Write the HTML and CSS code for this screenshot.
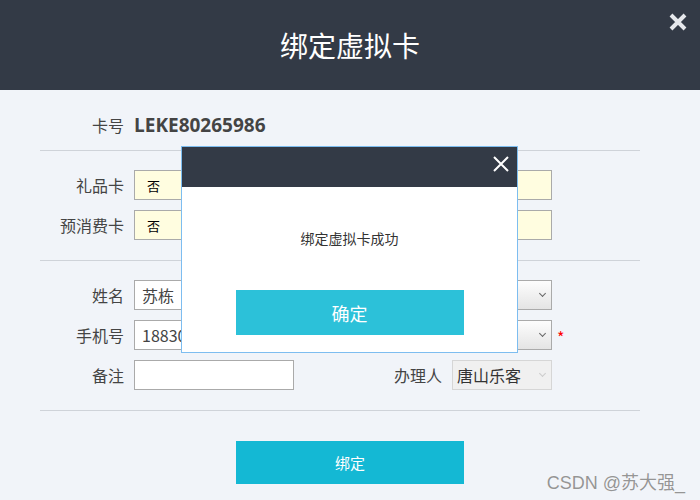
FILE: index.html
```html
<!DOCTYPE html>
<html lang="zh-CN">
<head>
    <meta charset="UTF-8">
    <title>绑定虚拟卡</title>
    <link rel="stylesheet" href="styles.css">
</head>
<body>
    <div class="page">
        <div class="page-head">
            <h1>绑定虚拟卡</h1>
            <span class="head-close">
                <svg width="18" height="18" viewBox="0 0 18 18"><path d="M2 2L16 16M16 2L2 16" stroke="#e6e8ec" stroke-width="4"/></svg>
            </span>
        </div>

        <div class="content">
            <div class="card-row">
                <span class="label">卡号</span>
                <span class="card-no">LEKE80265986</span>
            </div>

            <div class="section">
                <div class="form-row">
                    <span class="label">礼品卡</span>
                    <input class="field field-yellow" type="text" value="否" readonly>
                    <span class="label">余额</span>
                    <input class="field field-yellow" type="text" value="" readonly>
                </div>
                <div class="form-row">
                    <span class="label">预消费卡</span>
                    <input class="field field-yellow" type="text" value="否" readonly>
                    <span class="label">有效期</span>
                    <input class="field field-yellow" type="text" value="" readonly>
                </div>
            </div>

            <div class="section">
                <div class="form-row">
                    <span class="label">姓名</span>
                    <input class="field" type="text" value="苏栋">
                    <span class="label">性别</span>
                    <div class="select"><span></span><i class="chev"></i></div>
                </div>
                <div class="form-row">
                    <span class="label">手机号</span>
                    <input class="field" type="text" value="18830000000">
                    <span class="label">会员等级</span>
                    <div class="select"><span></span><i class="chev"></i></div>
                    <span class="req">*</span>
                </div>
                <div class="form-row">
                    <span class="label">备注</span>
                    <input class="field" type="text" value="">
                    <span class="label">办理人</span>
                    <div class="select select-off"><span>唐山乐客</span><i class="chev"></i></div>
                </div>
            </div>
        </div>

        <div class="bind-wrap">
            <button class="bind-btn">绑定</button>
        </div>

        <div class="watermark">CSDN @苏大强_</div>

        <div class="dialog">
            <div class="dialog-head">
                <span class="dialog-close">
                    <svg width="16" height="16" viewBox="0 0 16 16"><path d="M1 1L15 15M15 1L1 15" stroke="#fff" stroke-width="2"/></svg>
                </span>
            </div>
            <div class="dialog-body">
                <p class="dialog-msg">绑定虚拟卡成功</p>
                <button class="ok-btn">确定</button>
            </div>
        </div>
    </div>
</body>
</html>
```

FILE: styles.css
```css
body {
    margin: 0;
    font-family: "Noto Sans CJK SC", "Noto Sans", sans-serif;
    background: #f1f4f9;
}
.page {
    position: relative;
    width: 700px;
    height: 500px;
    overflow: hidden;
}
.page-head {
    position: relative;
    height: 90px;
    background: #333a46;
    display: flex;
    align-items: center;
    justify-content: center;
}
.page-head h1 {
    margin: 0;
    color: #fff;
    font-size: 28px;
    font-weight: normal;
    line-height: 1;
}
.head-close {
    position: absolute;
    top: 13px;
    right: 13px;
    width: 18px;
    height: 18px;
}
.head-close svg, .dialog-close svg {
    display: block;
}
.content {
    margin-left: 40px;
    width: 600px;
}
.card-row {
    height: 50px;
    padding-top: 10px;
    display: flex;
    align-items: center;
}
.label {
    font-size: 16px;
    color: #444;
    text-align: right;
    white-space: nowrap;
}
.card-row .label {
    width: 84px;
}
.card-no {
    margin-left: 10px;
    font-family: "Open Sans", "Noto Sans", sans-serif;
    font-size: 19px;
    font-weight: bold;
    color: #444;
}
.section {
    border-top: 1px solid #cfd3d9;
    padding: 19px 0 20px;
    display: flex;
    flex-direction: column;
    gap: 10px;
}
.section + .section {
    border-bottom: 1px solid #cfd3d9;
}
.form-row {
    display: grid;
    grid-template-columns: 84px 160px 138px 100px 20px;
    column-gap: 10px;
    align-items: center;
    height: 30px;
}
.field {
    box-sizing: border-box;
    width: 160px;
    height: 30px;
    margin: 0;
    padding: 0 7px;
    border: 1px solid #aaa;
    background: #fff;
    font-family: "Noto Sans CJK SC", "Noto Sans", sans-serif;
    font-size: 16px;
    color: #444;
    outline: none;
}
.form-row .field:nth-of-type(2) {
    width: 100px;
}
.field-yellow {
    background: #fffde0;
    padding-left: 12px;
    font-size: 13px;
    color: #000;
}
.select {
    box-sizing: border-box;
    width: 100px;
    height: 30px;
    border: 1px solid #aaa;
    background: linear-gradient(#fdfdfd, #e4e4e4);
    display: flex;
    align-items: center;
    justify-content: space-between;
    padding: 0 6px 0 4px;
    font-size: 16px;
    color: #333;
}
.chev {
    width: 4px;
    height: 4px;
    border-right: 1.5px solid #666;
    border-bottom: 1.5px solid #666;
    transform: rotate(45deg);
    margin-top: -3px;
}
.select-off {
    background: #f0f0f0;
    border-color: #d6d6d6;
}
.select-off .chev {
    border-color: #ccc;
}
.req {
    color: #f00;
    font-size: 16px;
    margin-left: -5px;
    margin-top: 4px;
}
.bind-wrap {
    display: flex;
    justify-content: center;
    padding-top: 30px;
}
.bind-btn {
    width: 228px;
    height: 43px;
    border: none;
    background: #14b8d4;
    color: #fff;
    font-family: "Noto Sans CJK SC", sans-serif;
    font-size: 15px;
    cursor: pointer;
}
.watermark {
    position: absolute;
    right: 15px;
    bottom: 6px;
    font-family: "Liberation Sans", "Noto Sans CJK SC", sans-serif;
    font-size: 18px;
    color: #959595;
    text-shadow: 0 0 1px #fff;
}
.dialog {
    position: absolute;
    left: 181px;
    top: 146px;
    width: 335px;
    height: 205px;
    border: 1px solid #7dbdf0;
    background: #fff;
}
.dialog-head {
    position: relative;
    height: 40px;
    background: #333a46;
}
.dialog-close {
    position: absolute;
    top: 9px;
    right: 8px;
}
.dialog-body {
    display: flex;
    flex-direction: column;
    align-items: center;
}
.dialog-msg {
    margin: 41px 0 0;
    font-size: 14px;
    line-height: 20px;
    color: #333;
}
.ok-btn {
    margin-top: 42px;
    width: 228px;
    height: 45px;
    border: none;
    background: #2cc1d9;
    color: #fff;
    font-family: "Noto Sans CJK SC", sans-serif;
    font-size: 18px;
}
```
